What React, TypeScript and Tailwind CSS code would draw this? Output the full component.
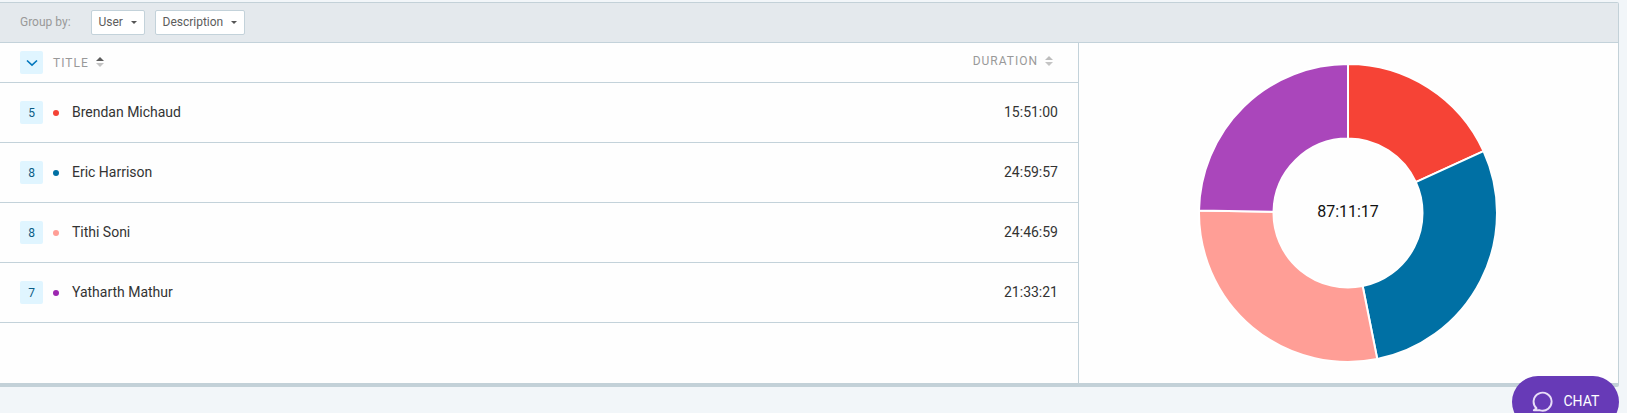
type Entry = { count: number; name: string; time: string; seconds: number; dot: string; slice: string };

const entries: Entry[] = [
  { count: 5, name: "Brendan Michaud", time: "15:51:00", seconds: 57060, dot: "#f44336", slice: "#f64336" },
  { count: 8, name: "Eric Harrison", time: "24:59:57", seconds: 89997, dot: "#0070a4", slice: "#0070a4" },
  { count: 8, name: "Tithi Soni", time: "24:46:59", seconds: 89219, dot: "#ff9e96", slice: "#ff9e96" },
  { count: 7, name: "Yatharth Mathur", time: "21:33:21", seconds: 77601, dot: "#9c27b0", slice: "#aa46bb" },
];

function slicePath(from: number, to: number, outer: number, inner: number) {
  const at = (t: number, r: number) => {
    const a = t * 2 * Math.PI;
    return `${150 + r * Math.sin(a)} ${150 - r * Math.cos(a)}`;
  };
  return `M${at(from, outer)}A${outer} ${outer} 0 0 1 ${at(to, outer)}L${at(to, inner)}A${inner} ${inner} 0 0 0 ${at(from, inner)}Z`;
}

function Donut() {
  const total = entries.reduce((sum, e) => sum + e.seconds, 0);
  let start = 0;
  return (
    <svg width="300" height="300" viewBox="0 0 300 300" className="shrink-0">
      {entries.map((e) => {
        const from = start / total;
        start += e.seconds;
        return (
          <path key={e.name} d={slicePath(from, start / total, 149, 74.5)} fill={e.slice} stroke="#fff" strokeWidth="2" strokeLinejoin="round" />
        );
      })}
      <text x="150" y="154" textAnchor="middle" fontSize="16" fill="#111">
        87:11:17
      </text>
    </svg>
  );
}

function SortIcon({ active }: { active?: boolean }) {
  return (
    <svg width="8" height="10" viewBox="0 0 8 10" className="shrink-0">
      <path d="M0 4 4 0 8 4Z" fill={active ? "#5c5c5c" : "#bdbdbd"} />
      <path d="M0 6H8L4 10Z" fill="#c4c4c4" />
    </svg>
  );
}

function Picker({ label, width }: { label: string; width: string }) {
  return (
    <button className={`flex h-[25px] items-center justify-between rounded-[2px] border border-[#c3d2da] bg-white pr-[7px] pl-[6.5px] text-[12px] text-[#5c5c5c] ${width}`}>
      <span className="-mt-[2px]">{label}</span>
      <svg width="6" height="3" viewBox="0 0 6 3" className="-mt-px">
        <path d="M0 0H6L3 3Z" fill="#555" />
      </svg>
    </button>
  );
}

export default function App() {
  return (
    <div className="relative h-[413px] w-full overflow-hidden bg-[#f2f6f9] pt-[2px] font-['Roboto',sans-serif]">
      <section className="flex h-[385px] w-[1619px] flex-col rounded-r-[2px] border-t border-r border-b-4 border-[#c3d1d8] bg-[#fefefe]">
        <div className="flex h-10 shrink-0 items-center border-b border-[#c3d2da] bg-[#e4e9ed] pl-5">
          <span className="-mt-px w-[71px] text-[12px] text-[#999]">Group by:</span>
          <div className="flex gap-[10px]">
            <Picker label="User" width="w-[54px]" />
            <Picker label="Description" width="w-[90px]" />
          </div>
        </div>
        <div className="flex min-h-0 flex-1">
          <div className="flex w-[1079px] flex-col border-r border-[#c3d2da]">
            <div className="flex h-10 items-center border-b border-[#c3d2da] pr-[25px] pl-5 text-[12px] tracking-[1px] text-[#999]">
              <span className="flex h-[23px] w-[23px] items-center justify-center rounded-[2px] bg-[#e0f5ff]">
                <svg width="12" height="8" viewBox="0 0 12 8" fill="none" className="mt-px">
                  <path d="M1 1.500 6 6.200l5-4.700" stroke="#0277bd" strokeWidth="1.600" />
                </svg>
              </span>
              <span className="ml-[10px]">TITLE</span>
              <span className="ml-[7px] -mt-px">
                <SortIcon active />
              </span>
              <div className="-mt-1 ml-auto flex items-center gap-[7px]">
                <span>DURATION</span>
                <SortIcon />
              </div>
            </div>
            {entries.map((e) => (
              <div key={e.name} className="flex h-[60px] items-center border-b border-[#c3d2da] pr-5 pl-5 text-[14px] text-[#333]">
                <span className="flex h-[23px] w-[23px] items-center justify-center rounded-[2px] bg-[#e0f5ff] text-[12px] text-[#0a5c85]">
                  {e.count}
                </span>
                <span className="ml-[10px] h-[6px] w-[6px] rounded-full" style={{ backgroundColor: e.dot }} />
                <span className="ml-[13px] tracking-[-0.01px]">{e.name}</span>
                <span className="ml-auto">{e.time}</span>
              </div>
            ))}
          </div>
          <div className="flex flex-1 items-start justify-center pt-5 pr-px">
            <Donut />
          </div>
        </div>
      </section>
      <button className="absolute top-[376px] left-[1512px] flex h-[52px] w-[107px] items-center rounded-full bg-[#673ab7] pl-5 text-[14px] text-white">
        <svg width="22" height="22" viewBox="0 0 22 22" fill="none" className="shrink-0">
          <path d="M4.500 17.300A9 9 0 1 1 8 19.300L1.800 19.300Z" stroke="#e9def8" strokeWidth="1.900" strokeLinejoin="round" />
        </svg>
        <span className="-mt-px ml-[9.5px]">CHAT</span>
      </button>
    </div>
  );
}
